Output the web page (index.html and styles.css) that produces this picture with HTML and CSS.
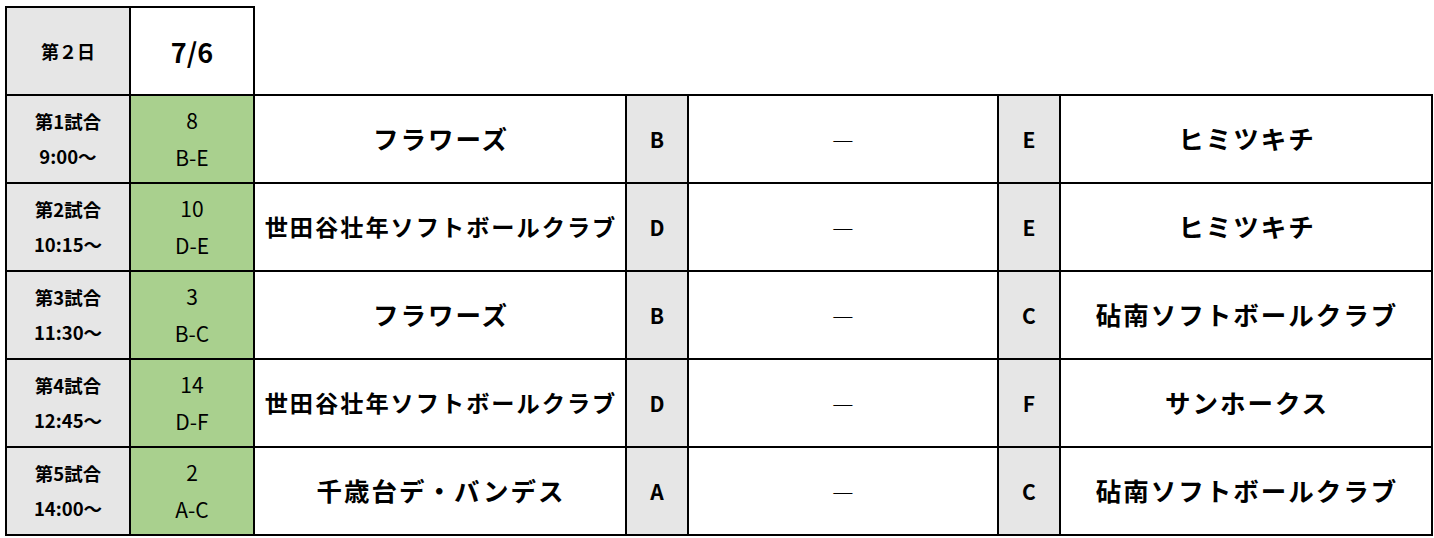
FILE: index.html
```html
<!DOCTYPE html>
<html lang="ja">
<head>
<meta charset="utf-8">
<link rel="stylesheet" href="styles.css">
</head>
<body>
<div class="wrap">
<table class="sched">
  <colgroup>
    <col class="c-slot"><col class="c-game"><col class="c-team"><col class="c-grp"><col class="c-score"><col class="c-grp"><col class="c-team">
  </colgroup>
  <tr class="head">
    <td class="slot day">第２日</td>
    <td class="date">7/6</td>
    <td class="blank" colspan="5"></td>
  </tr>
  <tr>
    <td class="slot"><div>第1試合</div><div>9:00～</div></td>
    <td class="game"><div>8</div><div>B-E</div></td>
    <td class="team">フラワーズ</td>
    <td class="grp">B</td>
    <td class="score">—</td>
    <td class="grp">E</td>
    <td class="team">ヒミツキチ</td>
  </tr>
  <tr>
    <td class="slot"><div>第2試合</div><div>10:15～</div></td>
    <td class="game"><div>10</div><div>D-E</div></td>
    <td class="team fit">世田谷壮年ソフトボールクラブ</td>
    <td class="grp">D</td>
    <td class="score">—</td>
    <td class="grp">E</td>
    <td class="team">ヒミツキチ</td>
  </tr>
  <tr>
    <td class="slot"><div>第3試合</div><div>11:30～</div></td>
    <td class="game"><div>3</div><div>B-C</div></td>
    <td class="team">フラワーズ</td>
    <td class="grp">B</td>
    <td class="score">—</td>
    <td class="grp">C</td>
    <td class="team">砧南ソフトボールクラブ</td>
  </tr>
  <tr>
    <td class="slot"><div>第4試合</div><div>12:45～</div></td>
    <td class="game"><div>14</div><div>D-F</div></td>
    <td class="team fit">世田谷壮年ソフトボールクラブ</td>
    <td class="grp">D</td>
    <td class="score">—</td>
    <td class="grp">F</td>
    <td class="team">サンホークス</td>
  </tr>
  <tr>
    <td class="slot"><div>第5試合</div><div>14:00～</div></td>
    <td class="game"><div>2</div><div>A-C</div></td>
    <td class="team">千歳台デ・バンデス</td>
    <td class="grp">A</td>
    <td class="score">—</td>
    <td class="grp">C</td>
    <td class="team">砧南ソフトボールクラブ</td>
  </tr>
</table>
</div>
</body>
</html>
```
FILE: styles.css
```css
html, body {
  margin: 0;
  padding: 0;
  background: #fff;
}
.wrap {
  padding: 6px 0 0 5px;
}
.sched {
  border-collapse: collapse;
  table-layout: fixed;
  font-family: "Noto Sans CJK JP", "Noto Sans", sans-serif;
  color: #000;
}
.c-slot { width: 124px; }
.c-game { width: 124px; }
.c-team { width: 372px; }
.c-grp { width: 62px; }
.c-score { width: 310px; }
.sched tr { height: 88px; }
.sched td {
  border: 2px solid #000;
  padding: 0;
  text-align: center;
  vertical-align: middle;
  white-space: nowrap;
}
.sched td.blank {
  border: none;
  border-bottom: 2px solid #000;
}
.slot {
  background: #e6e6e6;
  font-weight: 700;
  font-size: 18.5px;
  line-height: 35px;
}
.slot.day {
  font-size: 18px;
}
.date {
  background: #fff;
  font-weight: 700;
  font-size: 27px;
}
.game {
  background: #a9d08e;
  font-size: 21px;
  font-weight: 400;
  line-height: 37px;
}
.team {
  font-size: 25.5px;
  font-weight: 700;
  letter-spacing: 2px;
  text-indent: 2px;
  padding-bottom: 3px !important;
}
.team.fit {
  font-size: 23.2px;
}
.grp {
  background: #e6e6e6;
  font-size: 21px;
  font-weight: 700;
}
.score {
  font-size: 24px;
  font-weight: 300;
  padding-bottom: 3px !important;
}
```
